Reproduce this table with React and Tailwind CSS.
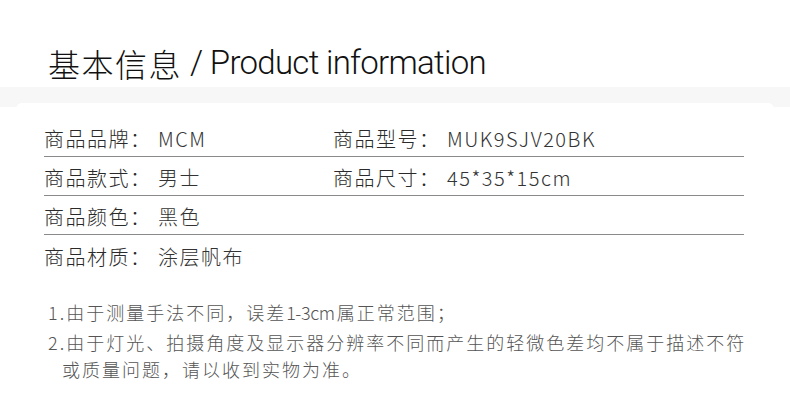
const rows = [
  [['商品品牌：', 'MCM'], ['商品型号：', 'MUK9SJV20BK']],
  [['商品款式：', '男士'], ['商品尺寸：', '45*35*15cm']],
  [['商品颜色：', '黑色'], null],
  [['商品材质：', '涂层帆布'], null],
];

function Cell({ item }) {
  if (!item) return <div />;
  return (
    <div className="flex items-center">
      <span className="w-[114px] shrink-0 tracking-[1.5px] text-[#2a2a2a]">{item[0]}</span>
      <span className="tracking-[1.5px] text-[#333]">{item[1]}</span>
    </div>
  );
}

export default function App() {
  return (
    <div className="w-[790px] h-[419px] overflow-hidden bg-white font-['Noto_Sans_CJK_SC',sans-serif] font-light">
      {/* title */}
      <div className="flex h-[87px] items-end pb-[8px] pl-[48px]">
        <span className="text-[32px] font-light leading-none text-[#111] tracking-[1.5px]">基本信息</span>
        <span className="ml-[8px] font-['Roboto',sans-serif] text-[33px] font-light leading-none text-[#111] tracking-[-0.7px]">
          / Product information
        </span>
      </div>

      <div className="h-[20px] bg-[#f7f7f7]" />

      <div className="relative -mt-[4px] mx-[16px] rounded-t-[6px] bg-white pt-[15px]">
        {/* spec table */}
        <div className="ml-[28px] w-[700px] text-[20px]">
          {rows.map((row, i) => (
            <div
              key={i}
              className={`grid h-[39px] grid-cols-[289px_1fr] pt-[4px] ${i < rows.length - 1 ? 'border-b-[1.5px] border-[#8a8a8a]' : ''}`}
            >
              <Cell item={row[0]} />
              <Cell item={row[1]} />
            </div>
          ))}
        </div>

        {/* notes */}
        <div className="ml-[32px] mt-[25px] w-[702px] text-[18px] leading-[27px] tracking-[2px] text-[#555]">
          <p>1.由于测量手法不同，误差<span className="tracking-[-0.4px] mr-[2px]">1-3cm</span>属正常范围；</p>
          <p className="mt-[3px] pl-[14px] -indent-[14px]">
            2.由于灯光、拍摄角度及显示器分辨率不同而产生的轻微色差均不属于描述不符或质量问题，请以收到实物为准。
          </p>
        </div>
      </div>
    </div>
  );
}
